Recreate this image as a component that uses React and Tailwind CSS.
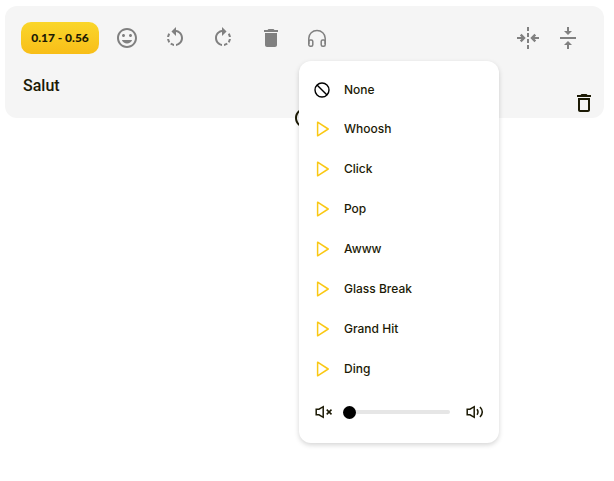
import { useState } from "react";
import {
  MdMood,
  MdRotateLeft,
  MdRotateRight,
  MdDelete,
  MdDeleteOutline,
  MdVerticalAlignCenter,
  MdAddCircleOutline,
} from "react-icons/md";

const SOUNDS = ["Whoosh", "Click", "Pop", "Awww", "Glass Break", "Grand Hit", "Ding"];

function Headphones() {
  return (
    <svg viewBox="0 0 24 24" className="size-6" fill="none" stroke="currentColor" strokeWidth="1.5" strokeLinejoin="round">
      <path d="M3.8 18V12.2a8.2 7.7 0 0 1 16.4 0V18" />
      <rect x="3.8" y="14" width="4" height="6.2" rx="1.5" />
      <rect x="16.2" y="14" width="4" height="6.2" rx="1.5" />
    </svg>
  );
}

function SplitCenter() {
  return (
    <svg viewBox="0 0 24 24" className="size-6" fill="none" stroke="currentColor" strokeWidth="2">
      <path d="M12 1v4M12 7v4M12 13v4M12 19v4" />
      <path d="M1 12h6M23 12h-6" />
      <path d="M4.7 8.7L8 12L4.7 15.3M19.3 8.7L16 12L19.3 15.3" strokeWidth="2.4" />
    </svg>
  );
}

function NoneIcon() {
  return (
    <svg viewBox="0 0 16 16" className="size-4" fill="none" stroke="black" strokeWidth="1.4">
      <circle cx="8" cy="8" r="7" />
      <path d="M3 3l10 10" />
    </svg>
  );
}

function PlayIcon() {
  return (
    <svg viewBox="0 0 16 16" className="size-4" fill="none" stroke="#fac814" strokeWidth="1.5" strokeLinejoin="round">
      <path d="M3.6 1.2L14.2 8L3.6 14.8Z" />
    </svg>
  );
}

function MuteIcon() {
  return (
    <svg viewBox="0 0 18 18" className="size-[18px] shrink-0" fill="none" stroke="#1c1a05" strokeWidth="1.5">
      <path d="M1.2 6.2H4L8.2 3.7V14.3L4 11.8H1.2Z" />
      <path d="M11.7 6.6l4.8 4.8M16.5 6.6l-4.8 4.8" />
    </svg>
  );
}

function LoudIcon() {
  return (
    <svg viewBox="0 0 18 18" className="size-[18px] shrink-0" fill="none" stroke="#1c1a05" strokeWidth="1.5">
      <path d="M1.2 6.2H4L8.2 3.7V14.3L4 11.8H1.2Z" />
      <path d="M11 6.2q2 2.8 0 5.6M14 4q4.6 5 0 10" />
    </svg>
  );
}

function ToolButton({ label, children }) {
  return (
    <button type="button" aria-label={label} className="flex size-6 items-center justify-center text-[#808080]">
      {children}
    </button>
  );
}

function SoundMenu() {
  const [volume, setVolume] = useState(0);
  return (
    <div className="absolute top-[55px] left-[294px] w-[200px] rounded-xl bg-white px-[15px] pt-[9px] pb-2 shadow-[0_2px_5px_rgba(0,0,0,0.17)]">
      <ul>
        <li>
          <button type="button" className="flex h-[39px] w-full items-center gap-[14px] text-left">
            <NoneIcon />
            None
          </button>
        </li>
        {SOUNDS.map((name) => (
          <li key={name}>
            <button type="button" className="flex h-10 w-full items-center gap-[14px] text-left">
              <PlayIcon />
              {name}
            </button>
          </li>
        ))}
      </ul>
      <div className="flex h-[46px] items-center gap-[10px] pl-px">
        <MuteIcon />
        <input
          type="range"
          min="0"
          max="100"
          value={volume}
          onChange={(event) => setVolume(Number(event.target.value))}
          aria-label="Volume"
          className="h-1 min-w-0 flex-1 appearance-none rounded-full bg-[#e6e6e6] [&::-webkit-slider-thumb]:size-[13px] [&::-webkit-slider-thumb]:appearance-none [&::-webkit-slider-thumb]:rounded-full [&::-webkit-slider-thumb]:bg-black"
        />
        <div className="pl-[6px]">
          <LoudIcon />
        </div>
      </div>
    </div>
  );
}

export default function App() {
  return (
    <main className="min-h-screen bg-white pt-[6px] pr-[10px] pl-[5px] font-['Inter',sans-serif] text-xs font-medium text-[#1c1a05]">
      <section className="relative rounded-xl bg-[#f5f5f5] px-4 pt-4 pb-2">
        <div className="flex h-8 items-center justify-between">
          <div className="flex items-center gap-4">
            <button
              type="button"
              className="h-8 w-[78px] rounded-[10px] bg-linear-to-b from-[#fad62a] to-[#f8be17] font-['Lato',sans-serif] text-xs font-black"
            >
              0.17 - 0.56
            </button>
            <div className="flex items-center gap-6">
              <ToolButton label="Emoji"><MdMood className="size-6" /></ToolButton>
              <ToolButton label="Rotate left"><MdRotateLeft className="size-6" /></ToolButton>
              <ToolButton label="Rotate right"><MdRotateRight className="size-6" /></ToolButton>
              <ToolButton label="Delete clip"><MdDelete className="size-6" /></ToolButton>
            </div>
            <div className="pl-[6px]">
              <ToolButton label="Sounds"><Headphones /></ToolButton>
            </div>
          </div>
          <div className="flex items-center gap-4 pr-2">
            <ToolButton label="Split"><SplitCenter /></ToolButton>
            <ToolButton label="Merge"><MdVerticalAlignCenter className="size-6" /></ToolButton>
          </div>
        </div>
        <p className="mt-5 h-6 pl-[2px] font-['Roboto',sans-serif] text-base/6 font-medium">Salut</p>
        <div className="-mt-[2px] -mr-2 flex h-[14px] items-center justify-end">
          <button type="button" aria-label="Delete line" className="flex size-6 items-center justify-center">
            <MdDeleteOutline className="size-6" />
          </button>
        </div>
        <button type="button" aria-label="Add line" className="absolute -bottom-3 left-1/2 -translate-x-1/2">
          <MdAddCircleOutline className="size-6" />
        </button>
        <SoundMenu />
      </section>
    </main>
  );
}
